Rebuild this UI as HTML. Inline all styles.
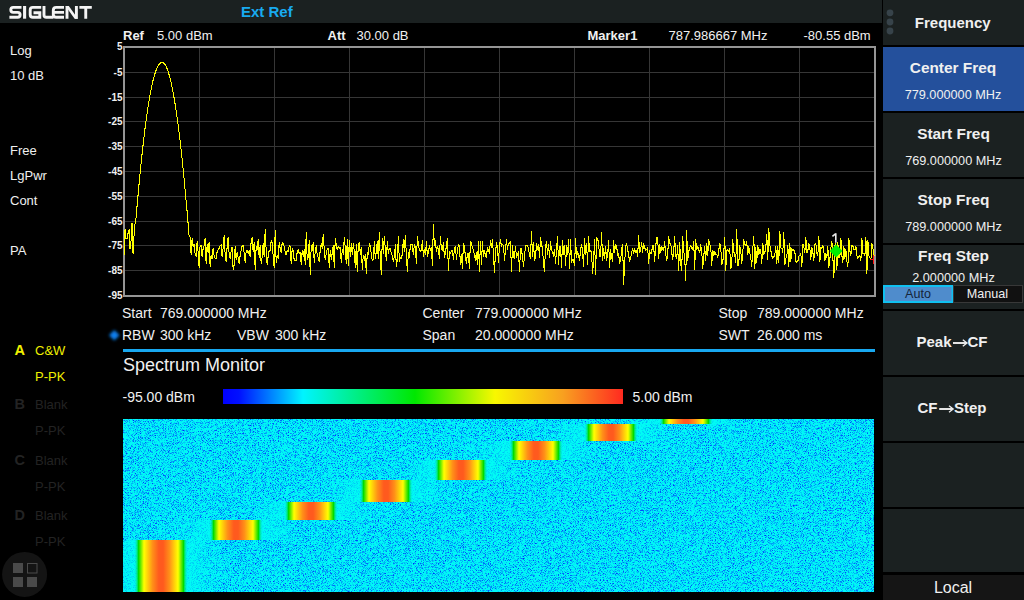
<!DOCTYPE html>
<html><head><meta charset="utf-8"><style>
html,body{margin:0;padding:0;background:#000;width:1024px;height:600px;overflow:hidden;font-family:"Liberation Sans", sans-serif;}
</style></head><body>
<svg width="1024" height="600" viewBox="0 0 1024 600" style="position:absolute;left:0;top:0" font-family='"Liberation Sans", sans-serif'><defs>
<filter id="nz" x="0" y="0" width="1" height="1" filterUnits="objectBoundingBox" color-interpolation-filters="sRGB">
 <feTurbulence type="fractalNoise" baseFrequency="1.4" numOctaves="1" seed="7" stitchTiles="noStitch"/>
 <feColorMatrix type="matrix" values="0 0 0 0 0  0 0 0 0 0.15  0 0 0 0 1  3.4 0 0 0 -1.66"/>
</filter>
<filter id="bl" x="-1" y="-1" width="3" height="3"><feGaussianBlur stdDeviation="1.4"/></filter>
<linearGradient id="cbar" x1="0" x2="1" y1="0" y2="0">
 <stop offset="0" stop-color="#0000ff"/>
 <stop offset="0.04" stop-color="#0010ff"/>
 <stop offset="0.20" stop-color="#00f4ff"/>
 <stop offset="0.48" stop-color="#00e800"/>
 <stop offset="0.68" stop-color="#f8f800"/>
 <stop offset="0.85" stop-color="#f8a020"/>
 <stop offset="1" stop-color="#ff2a20"/>
</linearGradient>
<linearGradient id="blk" x1="0" x2="1" y1="0" y2="0">
 <stop offset="0" stop-color="#00f0ff" stop-opacity="0"/>
 <stop offset="0.083" stop-color="#00dc00"/>
 <stop offset="0.185" stop-color="#ffff00"/>
 <stop offset="0.343" stop-color="#ff9018"/>
 <stop offset="0.46" stop-color="#ff5a1e"/>
 <stop offset="0.54" stop-color="#ff5a1e"/>
 <stop offset="0.657" stop-color="#ff9018"/>
 <stop offset="0.815" stop-color="#ffff00"/>
 <stop offset="0.917" stop-color="#00dc00"/>
 <stop offset="1" stop-color="#00f0ff" stop-opacity="0"/>
</linearGradient>
<linearGradient id="halo" x1="0" x2="1" y1="0" y2="0">
 <stop offset="0" stop-color="#00fcf4" stop-opacity="0"/>
 <stop offset="0.27" stop-color="#00fcf4" stop-opacity="0.72"/>
 <stop offset="0.73" stop-color="#00fcf4" stop-opacity="0.72"/>
 <stop offset="1" stop-color="#00fcf4" stop-opacity="0"/>
</linearGradient>
</defs><rect width="1024" height="600" fill="#000"/><rect x="0" y="0" width="882" height="23" fill="#1b2121"/><g fill="none" stroke="#f4f4f4" stroke-width="2.9"><path d="M21.5 7.4 H13.2 Q10.8 7.4 10.8 9.85 Q10.8 12.35 13.2 12.35 H17.7 Q20.1 12.35 20.1 14.8 Q20.1 17.3 17.7 17.3 H9.4"/><path d="M24.6 6 V18.7" stroke-width="3.1"/><path d="M41.2 7.4 H32.8 Q30.2 7.4 30.2 10 V14.7 Q30.2 17.3 32.8 17.3 H41.2 M39.8 18.7 V11.6 M41.2 12.8 H33.5"/><path d="M44 6 V15 Q44 17.3 46.4 17.3 H53.5"/><path d="M64 7.4 H56.2 Q53.3 7.4 53.3 10.3 V14.4 Q53.3 17.3 56.2 17.3 H64 M53.3 12.35 H64"/><path d="M67 18.7 V6 M76.4 6 V18.7"/><path d="M65.5 6 H68.8 L77.9 18.7 H74.6 Z" fill="#f4f4f4" stroke="none"/><path d="M79.4 7.4 H91.8 M85.75 6 V18.7" /></g><text x="241" y="17" font-size="15" font-weight="bold" fill="#18aaf0">Ext Ref</text><text x="123" y="40" font-size="13" font-weight="bold" fill="#f0f0f0">Ref</text><text x="157" y="40" font-size="13" fill="#f0f0f0">5.00 dBm</text><text x="327.5" y="40" font-size="13" font-weight="bold" fill="#f0f0f0">Att</text><text x="356.5" y="40" font-size="13" fill="#f0f0f0">30.00 dB</text><text x="587.5" y="40" font-size="13" font-weight="bold" fill="#f0f0f0">Marker1</text><text x="668.5" y="40" font-size="13" fill="#f0f0f0">787.986667 MHz</text><text x="803.5" y="40" font-size="13" fill="#f0f0f0">-80.55 dBm</text><text x="10" y="55" font-size="13" fill="#f0f0f0">Log</text><text x="10" y="80" font-size="13" fill="#f0f0f0">10 dB</text><text x="10" y="155" font-size="13" fill="#f0f0f0">Free</text><text x="10" y="180" font-size="13" fill="#f0f0f0">LgPwr</text><text x="10" y="205" font-size="13" fill="#f0f0f0">Cont</text><text x="10" y="255" font-size="13" fill="#f0f0f0">PA</text><text x="14.5" y="355" font-size="14.5" font-weight="bold" fill="#f0f000">A</text><text x="35" y="355" font-size="13" fill="#f0f000">C&amp;W</text><text x="35" y="380.5" font-size="13" fill="#f0f000">P-PK</text><text x="14.5" y="409" font-size="14.5" font-weight="bold" fill="#232323">B</text><text x="35" y="409" font-size="13" fill="#232323">Blank</text><text x="35" y="435" font-size="13" fill="#232323">P-PK</text><text x="14.5" y="464.5" font-size="14.5" font-weight="bold" fill="#232323">C</text><text x="35" y="464.5" font-size="13" fill="#232323">Blank</text><text x="35" y="490.5" font-size="13" fill="#232323">P-PK</text><text x="14.5" y="519.5" font-size="14.5" font-weight="bold" fill="#232323">D</text><text x="35" y="519.5" font-size="13" fill="#232323">Blank</text><text x="35" y="545.5" font-size="13" fill="#232323">P-PK</text><g stroke="#363636" stroke-width="1" shape-rendering="crispEdges"><line x1="125" y1="72.5" x2="874" y2="72.5"/><line x1="199.5" y1="48" x2="199.5" y2="295"/><line x1="125" y1="97.5" x2="874" y2="97.5"/><line x1="274.5" y1="48" x2="274.5" y2="295"/><line x1="125" y1="121.5" x2="874" y2="121.5"/><line x1="349.5" y1="48" x2="349.5" y2="295"/><line x1="125" y1="146.5" x2="874" y2="146.5"/><line x1="424.5" y1="48" x2="424.5" y2="295"/><line x1="125" y1="171.5" x2="874" y2="171.5"/><line x1="499.5" y1="48" x2="499.5" y2="295"/><line x1="125" y1="196.5" x2="874" y2="196.5"/><line x1="574.5" y1="48" x2="574.5" y2="295"/><line x1="125" y1="221.5" x2="874" y2="221.5"/><line x1="649.5" y1="48" x2="649.5" y2="295"/><line x1="125" y1="245.5" x2="874" y2="245.5"/><line x1="724.5" y1="48" x2="724.5" y2="295"/><line x1="125" y1="270.5" x2="874" y2="270.5"/><line x1="799.5" y1="48" x2="799.5" y2="295"/></g><rect x="124" y="47" width="751" height="249" fill="none" stroke="#959595" stroke-width="2" shape-rendering="crispEdges"/><text x="122.5" y="50.3" font-size="10" font-weight="bold" fill="#f0f0f0" text-anchor="end">5</text><text x="122.5" y="75.8" font-size="10" font-weight="bold" fill="#f0f0f0" text-anchor="end">-5</text><text x="122.5" y="100.8" font-size="10" font-weight="bold" fill="#f0f0f0" text-anchor="end">-15</text><text x="122.5" y="124.8" font-size="10" font-weight="bold" fill="#f0f0f0" text-anchor="end">-25</text><text x="122.5" y="149.8" font-size="10" font-weight="bold" fill="#f0f0f0" text-anchor="end">-35</text><text x="122.5" y="174.8" font-size="10" font-weight="bold" fill="#f0f0f0" text-anchor="end">-45</text><text x="122.5" y="199.8" font-size="10" font-weight="bold" fill="#f0f0f0" text-anchor="end">-55</text><text x="122.5" y="224.8" font-size="10" font-weight="bold" fill="#f0f0f0" text-anchor="end">-65</text><text x="122.5" y="248.8" font-size="10" font-weight="bold" fill="#f0f0f0" text-anchor="end">-75</text><text x="122.5" y="273.8" font-size="10" font-weight="bold" fill="#f0f0f0" text-anchor="end">-85</text><text x="122.5" y="299.3" font-size="10" font-weight="bold" fill="#f0f0f0" text-anchor="end">-95</text><path d="M124.5 230V255M125.5 229V239M126.5 238V239M127.5 233V239M128.5 230V234M129.5 229V249M130.5 241V249M131.5 223V241M132.5 223V253M133.5 236V254M134.5 224V236M135.5 218V224M136.5 206V218M137.5 195V207M138.5 184V196M139.5 174V185M140.5 164V174M141.5 154V164M142.5 145V155M143.5 137V146M144.5 128V137M145.5 121V129M146.5 114V121M147.5 107V114M148.5 101V107M149.5 95V101M150.5 90V95M151.5 85V90M152.5 80V85M153.5 77V81M154.5 73V77M155.5 70V74M156.5 68V71M157.5 66V68M158.5 64V66M159.5 63V65M160.5 62V64M161.5 62V63M162.5 62V63M163.5 62V64M164.5 63V65M165.5 64V66M166.5 66V69M167.5 68V71M168.5 71V75M169.5 74V78M170.5 78V82M171.5 82V87M172.5 87V92M173.5 92V98M174.5 97V104M175.5 103V110M176.5 110V117M177.5 117V124M178.5 124V132M179.5 132V140M180.5 140V149M181.5 149V158M182.5 158V168M183.5 168V178M184.5 178V189M185.5 189V200M186.5 200V211M187.5 210V223M188.5 222V235M189.5 235V237M190.5 237V253M191.5 240V255M192.5 238V246M193.5 244V247M194.5 244V253M195.5 253V256M196.5 243V257M197.5 241V251M198.5 251V266M199.5 247V268M200.5 245V247M201.5 245V256M202.5 249V257M203.5 246V250M204.5 239V246M205.5 238V261M206.5 247V264M207.5 244V252M208.5 243V253M209.5 242V264M210.5 256V267M211.5 255V259M212.5 249V259M213.5 248V255M214.5 255V258M215.5 258V259M216.5 252V259M217.5 250V253M218.5 248V250M219.5 246V249M220.5 245V246M221.5 244V256M222.5 249V257M223.5 237V249M224.5 235V252M225.5 252V261M226.5 248V262M227.5 238V249M228.5 237V252M229.5 252V258M230.5 252V259M231.5 247V252M232.5 247V267M233.5 265V270M234.5 249V266M235.5 246V258M236.5 253V260M237.5 252V257M238.5 257V263M239.5 256V264M240.5 251V257M241.5 246V251M242.5 245V247M243.5 245V252M244.5 252V261M245.5 253V263M246.5 250V253M247.5 250V253M248.5 251V254M249.5 250V256M250.5 243V257M251.5 238V244M252.5 237V250M253.5 244V252M254.5 242V265M255.5 250V270M256.5 246V251M257.5 241V250M258.5 239V255M259.5 247V258M260.5 245V261M261.5 258V264M262.5 245V258M263.5 243V255M264.5 234V257M265.5 229V247M266.5 247V263M267.5 257V265M268.5 251V258M269.5 250V252M270.5 242V251M271.5 240V243M272.5 242V254M273.5 254V266M274.5 237V268M275.5 230V257M276.5 256V263M277.5 255V258M278.5 245V259M279.5 242V248M280.5 247V252M281.5 244V253M282.5 242V245M283.5 243V246M284.5 246V251M285.5 251V255M286.5 251V255M287.5 250V252M288.5 247V252M289.5 245V247M290.5 246V261M291.5 251V264M292.5 248V252M293.5 250V259M294.5 258V261M295.5 260V261M296.5 253V261M297.5 250V254M298.5 249V253M299.5 252V254M300.5 252V262M301.5 253V265M302.5 250V255M303.5 251V257M304.5 249V261M305.5 239V265M306.5 232V254M307.5 254V260M308.5 244V258M309.5 240V267M310.5 252V275M311.5 245V252M312.5 244V251M313.5 242V258M314.5 254V263M315.5 247V254M316.5 245V253M317.5 253V257M318.5 257V261M319.5 252V262M320.5 245V253M321.5 243V247M322.5 237V249M323.5 234V246M324.5 246V258M325.5 255V260M326.5 250V255M327.5 248V250M328.5 248V263M329.5 254V268M330.5 250V257M331.5 254V260M332.5 247V255M333.5 245V262M334.5 245V268M335.5 238V246M336.5 243V249M337.5 247V250M338.5 246V248M339.5 247V249M340.5 247V259M341.5 253V263M342.5 249V253M343.5 242V255M344.5 237V245M345.5 245V260M346.5 246V264M347.5 239V259M348.5 247V266M349.5 240V252M350.5 247V257M351.5 243V252M352.5 247V255M353.5 243V249M354.5 249V263M355.5 251V268M356.5 244V265M357.5 251V272M358.5 243V252M359.5 242V251M360.5 249V255M361.5 247V263M362.5 259V270M363.5 255V259M364.5 256V261M365.5 254V268M366.5 258V274M367.5 252V259M368.5 247V255M369.5 243V247M370.5 245V252M371.5 252V259M372.5 259V261M373.5 247V260M374.5 241V254M375.5 253V259M376.5 244V254M377.5 241V254M378.5 240V259M379.5 232V251M380.5 251V270M381.5 249V275M382.5 238V250M383.5 241V254M384.5 236V245M385.5 245V257M386.5 247V261M387.5 241V250M388.5 249V254M389.5 248V250M390.5 248V252M391.5 252V255M392.5 255V260M393.5 258V262M394.5 249V258M395.5 244V260M396.5 259V267M397.5 244V262M398.5 236V253M399.5 253V262M400.5 257V259M401.5 255V259M402.5 244V256M403.5 239V248M404.5 240V252M405.5 235V248M406.5 248V266M407.5 259V272M408.5 252V259M409.5 249V258M410.5 244V250M411.5 244V245M412.5 244V252M413.5 248V255M414.5 244V248M415.5 246V258M416.5 246V264M417.5 236V246M418.5 241V248M419.5 248V251M420.5 250V252M421.5 244V251M422.5 240V251M423.5 250V257M424.5 249V253M425.5 247V255M426.5 241V251M427.5 250V257M428.5 248V254M429.5 245V249M430.5 248V251M431.5 247V259M432.5 239V266M433.5 224V240M434.5 238V246M435.5 240V248M436.5 247V252M437.5 246V249M438.5 248V255M439.5 245V259M440.5 236V245M441.5 244V250M442.5 245V251M443.5 242V252M444.5 251V258M445.5 248V255M446.5 241V249M447.5 238V259M448.5 258V271M449.5 251V259M450.5 252V254M451.5 250V252M452.5 250V256M453.5 253V260M454.5 247V253M455.5 246V254M456.5 254V260M457.5 247V254M458.5 244V247M459.5 245V257M460.5 256V265M461.5 254V263M462.5 253V269M463.5 243V254M464.5 245V253M465.5 252V261M466.5 257V264M467.5 253V258M468.5 253V263M469.5 252V269M470.5 241V253M471.5 242V246M472.5 246V249M473.5 249V253M474.5 253V258M475.5 255V261M476.5 252V260M477.5 251V265M478.5 241V259M479.5 254V272M480.5 241V255M481.5 251V265M482.5 241V252M483.5 250V257M484.5 250V254M485.5 253V257M486.5 251V258M487.5 247V252M488.5 249V252M489.5 246V254M490.5 240V246M491.5 243V248M492.5 239V248M493.5 248V265M494.5 261V273M495.5 247V262M496.5 242V248M497.5 245V256M498.5 253V263M499.5 242V253M500.5 239V244M501.5 243V247M502.5 244V245M503.5 245V253M504.5 253V261M505.5 244V255M506.5 239V245M507.5 245V250M508.5 243V246M509.5 242V244M510.5 241V258M511.5 257V272M512.5 245V258M513.5 251V258M514.5 251V259M515.5 246V252M516.5 252V258M517.5 253V256M518.5 251V262M519.5 260V272M520.5 248V260M521.5 248V254M522.5 253V262M523.5 261V267M524.5 251V261M525.5 245V251M526.5 245V246M527.5 245V247M528.5 247V252M529.5 252V257M530.5 244V259M531.5 231V245M532.5 244V257M533.5 242V252M534.5 251V261M535.5 250V259M536.5 243V251M537.5 246V250M538.5 244V251M539.5 247V258M540.5 237V247M541.5 241V247M542.5 246V256M543.5 256V268M544.5 259V272M545.5 244V259M546.5 241V248M547.5 248V255M548.5 244V251M549.5 250V258M550.5 241V250M551.5 246V251M552.5 251V254M553.5 252V257M554.5 249V256M555.5 256V264M556.5 243V257M557.5 236V250M558.5 250V265M559.5 246V256M560.5 246V257M561.5 254V268M562.5 240V255M563.5 246V255M564.5 245V255M565.5 255V266M566.5 245V257M567.5 247V255M568.5 239V253M569.5 253V269M570.5 239V255M571.5 250V263M572.5 259V261M573.5 259V263M574.5 253V266M575.5 238V254M576.5 247V258M577.5 251V255M578.5 253V258M579.5 255V261M580.5 247V256M581.5 244V248M582.5 247V259M583.5 254V267M584.5 238V254M585.5 245V255M586.5 243V253M587.5 252V265M588.5 236V252M589.5 243V252M590.5 250V252M591.5 251V262M592.5 262V274M593.5 251V268M594.5 239V255M595.5 255V275M596.5 237V259M597.5 238V241M598.5 240V249M599.5 249V257M600.5 246V257M601.5 232V246M602.5 244V261M603.5 248V256M604.5 252V259M605.5 246V254M606.5 252V261M607.5 249V258M608.5 240V252M609.5 252V268M610.5 249V260M611.5 253V259M612.5 253V262M613.5 240V253M614.5 246V253M615.5 244V249M616.5 245V250M617.5 249V256M618.5 253V258M619.5 257V264M620.5 256V262M621.5 247V256M622.5 244V261M623.5 260V285M624.5 257V276M625.5 245V257M626.5 243V246M627.5 246V252M628.5 251V258M629.5 257V262M630.5 256V260M631.5 251V256M632.5 248V251M633.5 250V254M634.5 248V252M635.5 250V253M636.5 250V253M637.5 248V257M638.5 235V249M639.5 242V253M640.5 247V252M641.5 242V247M642.5 246V253M643.5 243V249M644.5 245V249M645.5 248V251M646.5 249V250M647.5 247V253M648.5 253V264M649.5 250V259M650.5 252V254M651.5 249V254M652.5 245V250M653.5 245V252M654.5 251V262M655.5 243V256M656.5 237V244M657.5 237V245M658.5 245V259M659.5 244V254M660.5 247V253M661.5 246V251M662.5 247V250M663.5 247V251M664.5 241V248M665.5 246V256M666.5 256V261M667.5 248V259M668.5 236V249M669.5 239V244M670.5 243V246M671.5 246V255M672.5 254V260M673.5 246V257M674.5 236V247M675.5 243V257M676.5 254V259M677.5 245V255M678.5 254V271M679.5 242V261M680.5 249V266M681.5 259V271M682.5 236V260M683.5 241V253M684.5 253V265M685.5 264V281M686.5 230V265M687.5 241V261M688.5 250V258M689.5 247V251M690.5 245V247M691.5 246V249M692.5 247V250M693.5 241V251M694.5 250V270M695.5 239V260M696.5 243V250M697.5 246V249M698.5 247V251M699.5 250V253M700.5 244V251M701.5 247V256M702.5 256V269M703.5 253V265M704.5 246V254M705.5 251V261M706.5 243V255M707.5 246V256M708.5 239V251M709.5 241V245M710.5 245V252M711.5 252V266M712.5 250V261M713.5 251V256M714.5 251V255M715.5 252V255M716.5 254V255M717.5 255V258M718.5 248V256M719.5 243V249M720.5 244V252M721.5 252V265M722.5 259V264M723.5 248V260M724.5 237V249M725.5 246V271M726.5 250V265M727.5 249V251M728.5 250V252M729.5 248V254M730.5 254V269M731.5 257V268M732.5 239V257M733.5 243V253M734.5 252V257M735.5 254V263M736.5 229V254M737.5 239V266M738.5 259V266M739.5 245V260M740.5 247V254M741.5 254V264M742.5 249V261M743.5 239V249M744.5 241V245M745.5 244V246M746.5 241V246M747.5 245V255M748.5 246V253M749.5 248V254M750.5 254V260M751.5 260V267M752.5 246V262M753.5 236V246M754.5 244V269M755.5 247V264M756.5 251V263M757.5 245V258M758.5 247V255M759.5 249V254M760.5 249V254M761.5 254V264M762.5 243V259M763.5 245V255M764.5 251V254M765.5 244V252M766.5 234V245M767.5 240V260M768.5 228V252M769.5 232V246M770.5 246V252M771.5 251V257M772.5 256V259M773.5 256V258M774.5 253V257M775.5 246V253M776.5 250V264M777.5 246V260M778.5 250V263M779.5 231V256M780.5 234V248M781.5 248V249M782.5 248V253M783.5 232V248M784.5 239V265M785.5 258V264M786.5 254V258M787.5 245V254M788.5 249V267M789.5 243V262M790.5 247V262M791.5 248V259M792.5 249V251M793.5 249V251M794.5 250V254M795.5 253V262M796.5 261V263M797.5 260V262M798.5 256V261M799.5 255V256M800.5 253V256M801.5 256V267M802.5 244V263M803.5 244V248M804.5 248V253M805.5 237V250M806.5 240V253M807.5 249V253M808.5 243V250M809.5 244V250M810.5 250V260M811.5 247V257M812.5 248V254M813.5 253V261M814.5 244V258M815.5 243V245M816.5 245V254M817.5 252V256M818.5 236V252M819.5 240V262M820.5 247V260M821.5 247V249M822.5 245V248M823.5 246V253M824.5 253V261M825.5 253V260M826.5 254V258M827.5 246V256M828.5 250V268M829.5 257V266M830.5 247V258M831.5 241V247M832.5 243V261M833.5 260V278M834.5 245V273M835.5 243V247M836.5 247V270M837.5 242V266M838.5 245V258M839.5 254V258M840.5 238V255M841.5 240V257M842.5 256V263M843.5 246V260M844.5 248V259M845.5 249V257M846.5 251V262M847.5 262V267M848.5 238V263M849.5 240V252M850.5 251V256M851.5 245V254M852.5 245V247M853.5 246V250M854.5 249V250M855.5 246V250M856.5 247V256M857.5 256V259M858.5 256V258M859.5 255V257M860.5 256V261M861.5 238V258M862.5 240V254M863.5 253V254M864.5 253V256M865.5 237V254M866.5 241V274M867.5 240V270M868.5 242V256M869.5 256V258M870.5 258V260M871.5 243V258M872.5 244V249M873.5 249V256M874.5 255V256" fill="none" stroke="#ffff00" stroke-width="1" shape-rendering="crispEdges"/><path d="M836.1 244.6 L842.5 251 L836.1 257.4 L829.7 251 Z" fill="#00ee00"/><path d="M835.8 233.2 V242.8 M832.4 236.4 L835.8 233.6" stroke="#e8e8e8" stroke-width="1.6" fill="none"/><path d="M870 259.5 H874 M873.5 255 V264" stroke="#ff1010" stroke-width="1" fill="none" shape-rendering="crispEdges"/><text x="122" y="317.5" font-size="14" fill="#f0f0f0">Start</text><text x="160" y="317.5" font-size="14" fill="#f0f0f0">769.000000 MHz</text><text x="422.5" y="317.5" font-size="14" fill="#f0f0f0">Center</text><text x="475" y="317.5" font-size="14" fill="#f0f0f0">779.000000 MHz</text><text x="718.5" y="317.5" font-size="14" fill="#f0f0f0">Stop</text><text x="757" y="317.5" font-size="14" fill="#f0f0f0">789.000000 MHz</text><text x="122" y="339.5" font-size="14" fill="#f0f0f0">RBW</text><text x="160" y="339.5" font-size="14" fill="#f0f0f0">300 kHz</text><text x="237" y="339.5" font-size="14" fill="#f0f0f0">VBW</text><text x="275" y="339.5" font-size="14" fill="#f0f0f0">300 kHz</text><text x="422.5" y="339.5" font-size="14" fill="#f0f0f0">Span</text><text x="475" y="339.5" font-size="14" fill="#f0f0f0">20.000000 MHz</text><text x="718.5" y="339.5" font-size="14" fill="#f0f0f0">SWT</text><text x="757" y="339.5" font-size="14" fill="#f0f0f0">26.000 ms</text><path d="M114.3 330 L119.6 335.3 L114.3 340.6 L109 335.3 Z" fill="#0a80f0" filter="url(#bl)"/><rect x="123" y="349" width="752" height="3" fill="#18a8f0"/><text x="123" y="370.5" font-size="18" fill="#f0f0f0">Spectrum Monitor</text><text x="122.5" y="401.5" font-size="14" fill="#f0f0f0">-95.00 dBm</text><rect x="223" y="389" width="400" height="15" fill="url(#cbar)"/><text x="632.5" y="401.5" font-size="14" fill="#f0f0f0">5.00 dBm</text><rect x="123" y="419" width="751" height="173" fill="#00f8f6"/><rect x="123" y="419" width="751" height="173" fill="#000" filter="url(#nz)"/><clipPath id="wfc"><rect x="123" y="419" width="751" height="173"/></clipPath><g clip-path="url(#wfc)"><rect x="101" y="540" width="120" height="52" fill="url(#halo)"/><rect x="134" y="540" width="54" height="52" fill="url(#blk)"/><rect x="176" y="520" width="120" height="20" fill="url(#halo)"/><rect x="209" y="520" width="54" height="20" fill="url(#blk)"/><rect x="251" y="502" width="120" height="18" fill="url(#halo)"/><rect x="284" y="502" width="54" height="18" fill="url(#blk)"/><rect x="326" y="480" width="120" height="22" fill="url(#halo)"/><rect x="359" y="480" width="54" height="22" fill="url(#blk)"/><rect x="401" y="460" width="120" height="20" fill="url(#halo)"/><rect x="434" y="460" width="54" height="20" fill="url(#blk)"/><rect x="476" y="441" width="120" height="19" fill="url(#halo)"/><rect x="509" y="441" width="54" height="19" fill="url(#blk)"/><rect x="551" y="424" width="120" height="17" fill="url(#halo)"/><rect x="584" y="424" width="54" height="17" fill="url(#blk)"/><rect x="626" y="419" width="120" height="5" fill="url(#halo)"/><rect x="659" y="419" width="54" height="5" fill="url(#blk)"/></g><circle cx="24.6" cy="574.4" r="22.5" fill="#141414"/><rect x="13" y="563" width="10" height="10" fill="#4a4a4a"/><rect x="27.5" y="563.5" width="9.5" height="9.5" fill="none" stroke="#4a4a4a" stroke-width="1"/><rect x="13" y="577" width="10" height="10" fill="#4a4a4a"/><rect x="27" y="577" width="10" height="10" fill="#4a4a4a"/><rect x="883" y="0" width="141" height="45" fill="#1b2121"/><circle cx="890" cy="12.8" r="3.4" fill="#37434a"/><circle cx="890" cy="22" r="3.4" fill="#37434a"/><circle cx="890" cy="31" r="3.4" fill="#37434a"/><text x="952.8" y="27.5" font-size="15" font-weight="bold" fill="#f0f0f0" text-anchor="middle">Frequency</text><rect x="883" y="47" width="141" height="64" fill="#24509c"/><rect x="883" y="113" width="141" height="64" fill="#1b2121"/><rect x="883" y="179" width="141" height="64" fill="#1b2121"/><rect x="883" y="245" width="141" height="64" fill="#1b2121"/><rect x="883" y="311" width="141" height="64" fill="#1b2121"/><rect x="883" y="377" width="141" height="64" fill="#1b2121"/><rect x="883" y="443" width="141" height="64" fill="#1b2121"/><rect x="883" y="509" width="141" height="63" fill="#1b2121"/><text x="953" y="72.5" font-size="15.4" font-weight="bold" fill="#f0f0f0" text-anchor="middle">Center Freq</text><text x="953" y="98.5" font-size="12.7" fill="#f0f0f0" text-anchor="middle">779.000000 MHz</text><text x="953.5" y="138.5" font-size="15.4" font-weight="bold" fill="#f0f0f0" text-anchor="middle">Start Freq</text><text x="953.5" y="164.5" font-size="12.7" fill="#f0f0f0" text-anchor="middle">769.000000 MHz</text><text x="953.5" y="204.5" font-size="15.4" font-weight="bold" fill="#f0f0f0" text-anchor="middle">Stop Freq</text><text x="953.5" y="230.5" font-size="12.7" fill="#f0f0f0" text-anchor="middle">789.000000 MHz</text><text x="953.5" y="261" font-size="15.4" font-weight="bold" fill="#f0f0f0" text-anchor="middle">Freq Step</text><text x="953.5" y="282" font-size="12.7" fill="#f0f0f0" text-anchor="middle">2.000000 MHz</text><rect x="884" y="286" width="68.5" height="16" fill="#4f8ccc" stroke="#10c0f0" stroke-width="2"/><rect x="953.5" y="285.5" width="69" height="17" fill="#111" stroke="#383838" stroke-width="1"/><text x="918" y="298" font-size="12.6" fill="#15243a" text-anchor="middle">Auto</text><text x="987.5" y="298" font-size="12.6" fill="#f0f0f0" text-anchor="middle">Manual</text><text x="916.5" y="347" font-size="15" font-weight="bold" fill="#f0f0f0">Peak</text><text x="967.5" y="347" font-size="15" font-weight="bold" fill="#f0f0f0">CF</text><path d="M953 343 H966" stroke="#f0f0f0" stroke-width="1.9" fill="none"/><path d="M962.8 339.8 L967 343 L962.8 346.2" stroke="#f0f0f0" stroke-width="1.3" fill="none"/><text x="917.5" y="413" font-size="15" font-weight="bold" fill="#f0f0f0">CF</text><text x="954" y="413" font-size="15" font-weight="bold" fill="#f0f0f0">Step</text><path d="M939.2 409 H952.3" stroke="#f0f0f0" stroke-width="1.9" fill="none"/><path d="M949 405.8 L953.2 409 L949 412.2" stroke="#f0f0f0" stroke-width="1.3" fill="none"/><rect x="883" y="575" width="141" height="25" fill="#151515"/><text x="953" y="593" font-size="16" fill="#f0f0f0" text-anchor="middle">Local</text></svg>
</body></html>
